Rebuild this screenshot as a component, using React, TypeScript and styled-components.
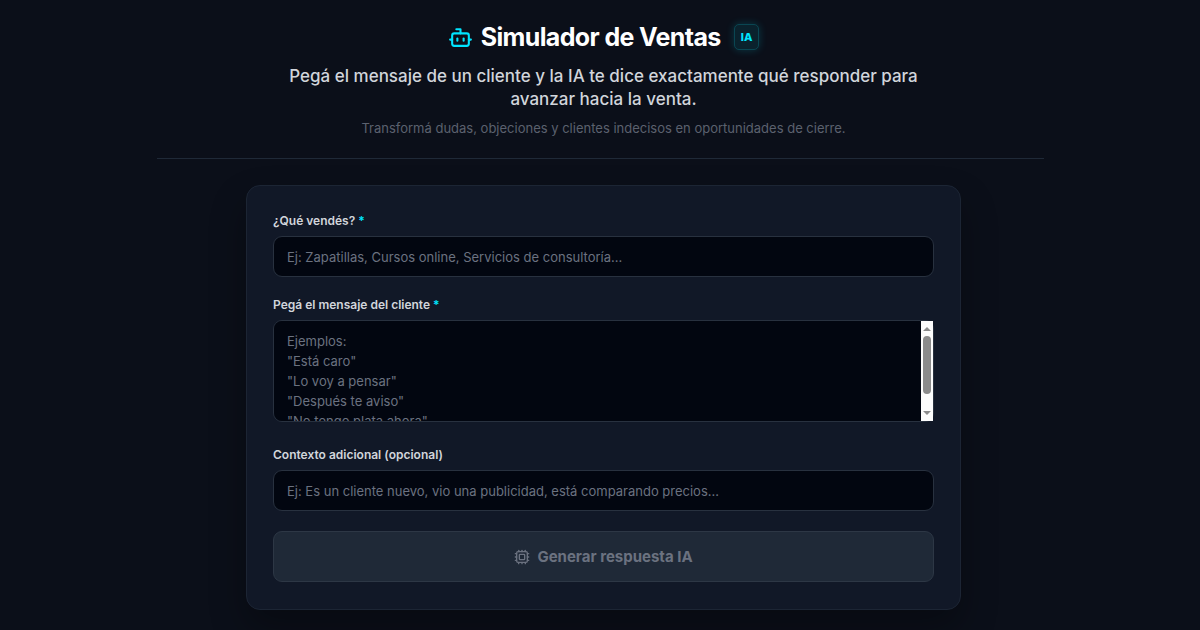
import React from "react";
import styled, { createGlobalStyle, css } from "styled-components";
import { Bot, Cpu } from "lucide-react";

const GlobalStyle = createGlobalStyle`
  *, *::before, *::after { box-sizing: border-box; }
  body {
    margin: 0;
    background: #0b0f19;
    color: #ffffff;
    font-family: Inter, "Liberation Sans", sans-serif;
  }
`;

const Page = styled.div`
  min-height: 100vh;
  padding: 21px 24px 20px;
`;

const Header = styled.header`
  display: flex;
  flex-direction: column;
  align-items: center;
  max-width: 887px;
  margin: 0 auto 26px;
  padding: 0 0 20px 7px;
  border-bottom: 1px solid #1f2937;
  text-align: center;
`;

const TitleRow = styled.div`
  display: flex;
  align-items: center;
  gap: 8px;
`;

const Title = styled.h1`
  margin: 0;
  font-size: 25px;
  line-height: 32px;
  font-weight: 700;
  letter-spacing: -0.025em;
`;

const Badge = styled.span`
  margin-left: 5px;
  padding: 4px 6px;
  border: 1px solid #0a4652;
  border-radius: 5px;
  background: #0a222d;
  box-shadow: 0 0 9px rgba(0, 229, 255, 0.2);
  color: #00e5ff;
  font-size: 11px;
  line-height: 16px;
  font-weight: 800;
`;

const Lead = styled.p`
  max-width: 640px;
  margin: 12px 0 0;
  color: #d1d5db;
  font-size: 17px;
  line-height: 23px;
  font-weight: 500;
`;

const Sublead = styled.p`
  margin: 7px 0 0;
  color: #5b616e;
  font-size: 13px;
  line-height: 20px;
`;

const Main = styled.main`
  max-width: 722px;
  margin: 0 auto;
  padding-left: 7px;
`;

const Card = styled.form`
  display: flex;
  flex-direction: column;
  gap: 20px;
  padding: 27px 26px;
  border: 1px solid #1c2534;
  border-radius: 14px;
  background: #111827;
  box-shadow: 0 18px 36px rgba(0, 0, 0, 0.3);
`;

const Field = styled.div`
  display: flex;
  flex-direction: column;
  gap: 7px;
`;

const Label = styled.label`
  color: #d1d5db;
  font-size: 12px;
  line-height: 16px;
  font-weight: 600;
`;

const Required = styled.span`
  color: #00e5ff;
`;

const control = css`
  display: block;
  width: 100%;
  padding: 10px 13px;
  border: 1px solid #28313f;
  border-radius: 9px;
  outline: none;
  background: #020610;
  color: #ffffff;
  font-family: inherit;
  font-size: 13px;
  line-height: 20px;

  &::placeholder {
    color: #6b7280;
    opacity: 1;
  }
`;

const TextInput = styled.input`
  ${control}
  height: 41px;
`;

const MessageBox = styled.div`
  position: relative;
  margin-bottom: 5px;
`;

const MessageArea = styled.textarea`
  ${control}
  height: 102px;
  padding-right: 25px;
  resize: none;
  scrollbar-width: none;
`;

const ScrollTrack = styled.div`
  position: absolute;
  top: 1px;
  right: 1px;
  bottom: 1px;
  display: flex;
  flex-direction: column;
  align-items: center;
  justify-content: space-between;
  width: 12px;
  padding: 6px 0;
  background: #fcfcfc;
  pointer-events: none;
`;

const ScrollThumb = styled.div`
  width: 8px;
  height: 58px;
  margin: 5px 0 auto;
  border-radius: 4px;
  background: #8b8b8b;
`;

const SubmitButton = styled.button`
  display: flex;
  align-items: center;
  justify-content: center;
  gap: 7px;
  width: 100%;
  padding: 14px;
  border: 1px solid #2d3745;
  border-radius: 9px;
  background: #1f2937;
  color: #6b7280;
  font-family: inherit;
  font-size: 15px;
  line-height: 21px;
  font-weight: 700;
`;

const examples = [
  "Ejemplos:",
  '"Está caro"',
  '"Lo voy a pensar"',
  '"Después te aviso"',
  '"No tengo plata ahora"',
  '"Quiero pensarlo"',
  '"Vi otro más barato"',
].join("\n");

function Scrollbar() {
  return (
    <ScrollTrack aria-hidden>
      <svg width="8" height="4" viewBox="0 0 8 4" fill="#8b8b8b">
        <path d="M0 4L4 0l4 4z" />
      </svg>
      <ScrollThumb />
      <svg width="8" height="4" viewBox="0 0 8 4" fill="#8b8b8b">
        <path d="M0 0h8L4 4z" />
      </svg>
    </ScrollTrack>
  );
}

export default function App() {
  return (
    <>
      <GlobalStyle />
      <Page>
        <Header>
          <TitleRow>
            <Bot size={25} color="#00e5ff" aria-hidden />
            <Title>Simulador de Ventas</Title>
            <Badge>IA</Badge>
          </TitleRow>
          <Lead>
            Pegá el mensaje de un cliente y la IA te dice exactamente qué responder para avanzar
            hacia la venta.
          </Lead>
          <Sublead>
            Transformá dudas, objeciones y clientes indecisos en oportunidades de cierre.
          </Sublead>
        </Header>
        <Main>
          <Card>
            <Field>
              <Label htmlFor="product">
                ¿Qué vendés? <Required>*</Required>
              </Label>
              <TextInput
                id="product"
                placeholder="Ej: Zapatillas, Cursos online, Servicios de consultoría..."
              />
            </Field>
            <Field>
              <Label htmlFor="message">
                Pegá el mensaje del cliente <Required>*</Required>
              </Label>
              <MessageBox>
                <MessageArea id="message" placeholder={examples} />
                <Scrollbar />
              </MessageBox>
            </Field>
            <Field>
              <Label htmlFor="context">Contexto adicional (opcional)</Label>
              <TextInput
                id="context"
                placeholder="Ej: Es un cliente nuevo, vio una publicidad, está comparando precios..."
              />
            </Field>
            <SubmitButton type="submit" disabled>
              <Cpu size={16} aria-hidden />
              Generar respuesta IA
            </SubmitButton>
          </Card>
        </Main>
      </Page>
    </>
  );
}
